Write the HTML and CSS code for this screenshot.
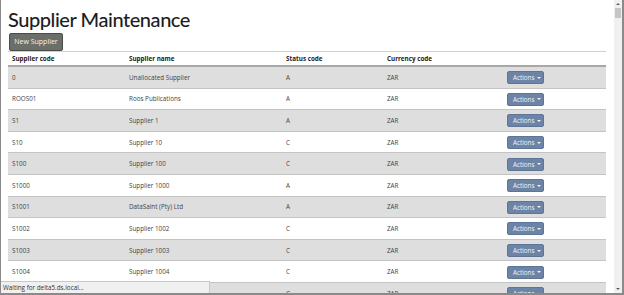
FILE: index.html
```html
<!DOCTYPE html>
<html>
<head>
<meta charset="utf-8">
<link rel="stylesheet" href="styles.css">
</head>
<body>
<div class="window">
  <div class="viewport">
    <main class="page">
      <h1 class="title">Supplier Maintenance</h1>
      <button class="btn-new">New Supplier</button>
      <table class="grid">
        <colgroup>
          <col class="c1"><col class="c2"><col class="c3"><col class="c4"><col class="c5">
        </colgroup>
        <thead>
          <tr><th>Supplier code</th><th>Supplier name</th><th>Status code</th><th>Currency code</th><th></th></tr>
        </thead>
        <tbody>
          <tr><td>0</td><td>Unallocated Supplier</td><td>A</td><td>ZAR</td><td><span class="btn-act">Actions <i class="caret"></i></span></td></tr>
          <tr><td>ROOS01</td><td>Roos Publications</td><td>A</td><td>ZAR</td><td><span class="btn-act">Actions <i class="caret"></i></span></td></tr>
          <tr><td>S1</td><td>Supplier 1</td><td>A</td><td>ZAR</td><td><span class="btn-act">Actions <i class="caret"></i></span></td></tr>
          <tr><td>S10</td><td>Supplier 10</td><td>C</td><td>ZAR</td><td><span class="btn-act">Actions <i class="caret"></i></span></td></tr>
          <tr><td>S100</td><td>Supplier 100</td><td>C</td><td>ZAR</td><td><span class="btn-act">Actions <i class="caret"></i></span></td></tr>
          <tr><td>S1000</td><td>Supplier 1000</td><td>A</td><td>ZAR</td><td><span class="btn-act">Actions <i class="caret"></i></span></td></tr>
          <tr><td>S1001</td><td>DataSaint (Pty) Ltd</td><td>A</td><td>ZAR</td><td><span class="btn-act">Actions <i class="caret"></i></span></td></tr>
          <tr><td>S1002</td><td>Supplier 1002</td><td>C</td><td>ZAR</td><td><span class="btn-act">Actions <i class="caret"></i></span></td></tr>
          <tr><td>S1003</td><td>Supplier 1003</td><td>C</td><td>ZAR</td><td><span class="btn-act">Actions <i class="caret"></i></span></td></tr>
          <tr><td>S1004</td><td>Supplier 1004</td><td>C</td><td>ZAR</td><td><span class="btn-act">Actions <i class="caret"></i></span></td></tr>
          <tr><td>S1005</td><td>Supplier 1005</td><td>C</td><td>ZAR</td><td><span class="btn-act">Actions <i class="caret"></i></span></td></tr>
        </tbody>
      </table>
    </main>
    <div class="status">Waiting for delta5.ds.local...</div>
  </div>
  <div class="scrollbar">
    <span class="arrow up"></span>
    <span class="thumb"></span>
    <span class="track"></span>
    <span class="arrow down"></span>
  </div>
</div>
</body>
</html>
```

FILE: styles.css
```css
html, body {
  margin: 0;
  padding: 0;
  width: 624px;
  height: 295px;
  overflow: hidden;
  background: #fff;
}

.window {
  box-sizing: border-box;
  width: 624px;
  height: 295px;
  display: flex;
  border-left: 1px solid #8a8a8a;
  border-right: 2px solid #8a8a8a;
  border-bottom: 2px solid #8a8a8a;
  overflow: hidden;
}

.viewport {
  position: relative;
  flex: 1;
  overflow: hidden;
  background: #fff;
}

.page {
  padding: 0 7px 0 7px;
  font-family: "Open Sans", "Noto Sans", sans-serif;
  color: #333;
}

.title {
  margin: 0;
  padding-top: 6px;
  font-family: "Lato", "Open Sans", sans-serif;
  font-weight: 500;
  font-size: 20px;
  line-height: 26px;
  letter-spacing: -0.45px;
  color: #1e1e1e;
}

.btn-new {
  display: block;
  margin: 1px 0 0 1px;
  height: 18px;
  width: 54px;
  padding: 0;
  background: #6b6e69;
  border: 1px solid #4a4c49;
  border-radius: 2px;
  color: #f2f2f2;
  font-family: "Open Sans", sans-serif;
  font-size: 7px;
  line-height: 16px;
  text-align: center;
}

.grid {
  width: 598px;
  table-layout: fixed;
  border-collapse: collapse;
  border-top: 1px solid #cfcfcf;
  font-size: 6.3px;
}

.c1 { width: 117px; }
.c2 { width: 157px; }
.c3 { width: 101px; }
.c4 { width: 120px; }
.c5 { width: 103px; }

.grid th {
  text-align: left;
  font-weight: 700;
  color: #222;
  height: 13px;
  padding: 0 4px;
  border-bottom: 2px solid #a8a8a8;
}

.grid td {
  height: 20.6px;
  padding: 0 4px;
  border-top: 1px solid #c4c4c4;
  color: #444;
  vertical-align: middle;
}

.grid tbody tr:nth-child(odd) td {
  background: #dedede;
}

.grid tbody tr:first-child td {
  border-top: none;
}

.btn-act {
  display: inline-flex;
  align-items: center;
  gap: 3px;
  height: 13px;
  padding: 0 5px;
  margin-top: 1px;
  background: #6d84a6;
  border: 1px solid #5e7597;
  border-radius: 2px;
  color: #f0f3f8;
  font-size: 6.3px;
  line-height: 13px;
  box-sizing: border-box;
  width: 37px;
}

.caret {
  display: inline-block;
  width: 0;
  height: 0;
  border-left: 2px solid transparent;
  border-right: 2px solid transparent;
  border-top: 2px solid #f0f3f8;
}

.status {
  position: absolute;
  left: 0;
  bottom: 0;
  width: 206px;
  height: 11px;
  background: #f0f0f0;
  border-top: 1px solid #c8c8c8;
  border-right: 1px solid #c8c8c8;
  font-family: "Open Sans", sans-serif;
  font-size: 6.3px;
  line-height: 11px;
  padding-left: 2px;
  color: #333;
  box-sizing: content-box;
}

.scrollbar {
  width: 8px;
  flex: none;
  background: #f0f0f0;
  display: flex;
  flex-direction: column;
  align-items: center;
}

.arrow {
  display: block;
  width: 0;
  height: 0;
  border-left: 2px solid transparent;
  border-right: 2px solid transparent;
  margin: 3px 0;
}

.arrow.up { border-bottom: 2px solid #606060; }
.arrow.down { border-top: 2px solid #606060; }

.thumb {
  display: block;
  width: 6px;
  height: 10px;
  background: #c6c6c6;
}

.track { flex: 1; }
```
